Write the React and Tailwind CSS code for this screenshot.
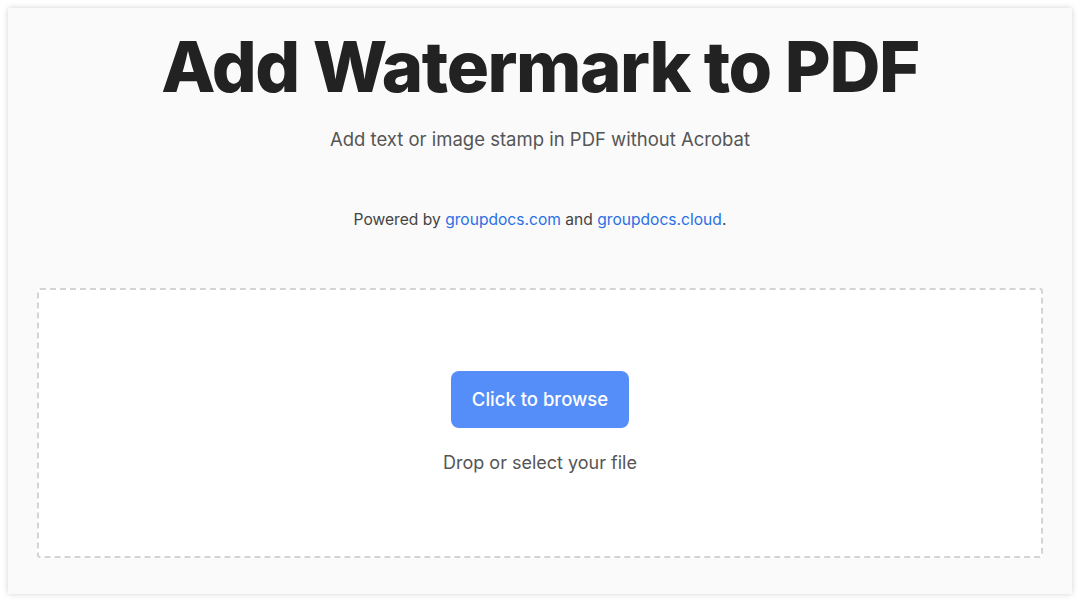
export default function App() {
  return (
    <div className="min-h-screen bg-white p-2" style={{ fontFamily: 'Inter, "Noto Sans", sans-serif' }}>
      <div className="h-[586px] bg-[#fafafa] shadow-[0_0_6px_rgba(0,0,0,0.18)] flex flex-col items-center px-[29px]">
        <h1 className="mt-[17px] text-[70.5px] leading-[84px] font-extrabold tracking-[-0.02em] text-[#222]">
          Add Watermark to PDF
        </h1>
        <p className="mt-[17px] text-[18.5px] leading-[26px] text-[#555]">
          Add text or image stamp in PDF without Acrobat
        </p>
        <p className="mt-[56px] text-[15.6px] leading-[24px] text-[#444]">
          Powered by{' '}
          <a href="#" className="text-[#2b70e4]">groupdocs.com</a>{' '}
          and{' '}
          <a href="#" className="text-[#2b70e4]">groupdocs.cloud</a>.
        </p>
        <div className="mt-[56px] w-full h-[270px] bg-white border-2 border-dashed border-[#d4d4d4] rounded-[3px] flex flex-col items-center pt-[81px]">
          <button className="w-[178px] h-[57px] rounded-[8px] bg-[#558ef8] text-white text-[18.5px] font-medium">
            Click to browse
          </button>
          <p className="mt-[22px] text-[18px] leading-[26px] text-[#555]">Drop or select your file</p>
        </div>
      </div>
    </div>
  )
}
